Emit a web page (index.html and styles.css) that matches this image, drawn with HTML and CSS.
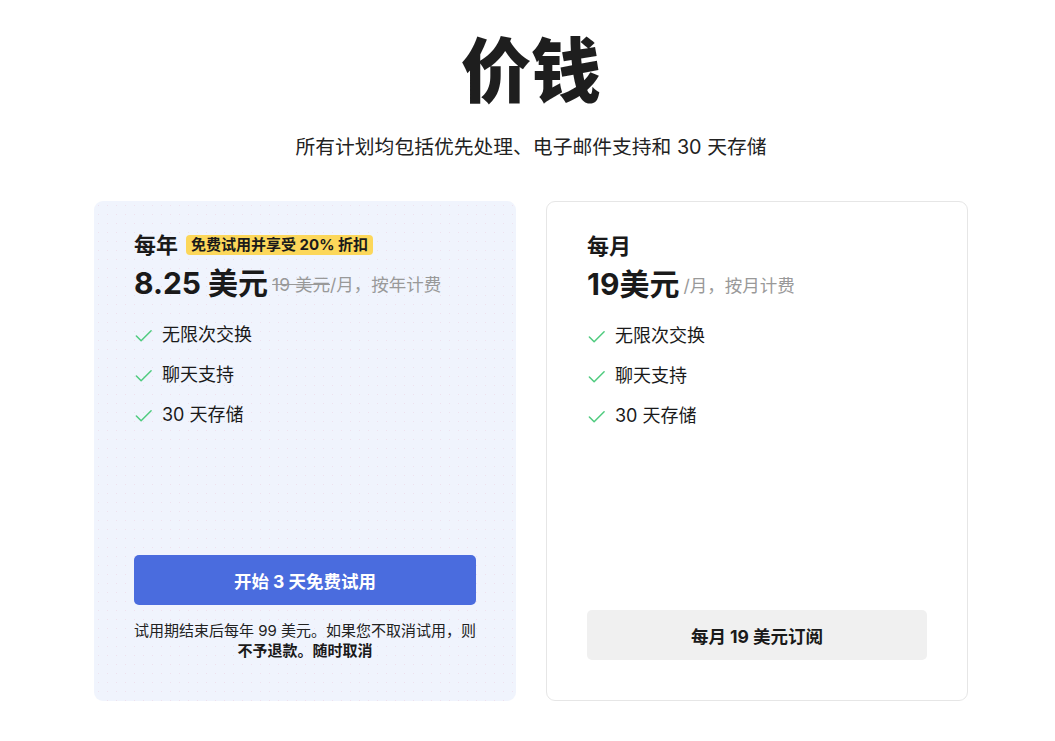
FILE: index.html
```html
<!DOCTYPE html>
<html lang="zh-CN">
<head>
<meta charset="utf-8">
<title>价钱</title>
<link rel="stylesheet" href="styles.css">
</head>
<body>
<main class="page">
  <h1 class="title">价钱</h1>
  <p class="subtitle">所有计划均包括优先处理、电子邮件支持和 30 天存储</p>
  <div class="plans">
    <section class="card card-featured">
      <div class="plan-head">
        <span class="plan-name">每年</span>
        <span class="badge">免费试用并享受 20% 折扣</span>
      </div>
      <div class="price">
        <span class="amount">8.25 美元</span>
        <span class="period"><s>19 美元</s>/月，按年计费</span>
      </div>
      <ul class="features">
        <li><svg class="check" viewBox="0 0 20 20"><polyline points="2.5 10.5 7.5 15.5 18 5"/></svg>无限次交换</li>
        <li><svg class="check" viewBox="0 0 20 20"><polyline points="2.5 10.5 7.5 15.5 18 5"/></svg>聊天支持</li>
        <li><svg class="check" viewBox="0 0 20 20"><polyline points="2.5 10.5 7.5 15.5 18 5"/></svg>30 天存储</li>
      </ul>
      <button class="btn btn-primary">开始 3 天免费试用</button>
      <p class="note"><span class="note-line">试用期结束后每年 99 美元。如果您不取消试用，则</span><strong>不予退款。随时取消</strong></p>
    </section>
    <section class="card card-plain">
      <div class="plan-head">
        <span class="plan-name">每月</span>
      </div>
      <div class="price">
        <span class="amount">19美元</span>
        <span class="period">/月，按月计费</span>
      </div>
      <ul class="features">
        <li><svg class="check" viewBox="0 0 20 20"><polyline points="2.5 10.5 7.5 15.5 18 5"/></svg>无限次交换</li>
        <li><svg class="check" viewBox="0 0 20 20"><polyline points="2.5 10.5 7.5 15.5 18 5"/></svg>聊天支持</li>
        <li><svg class="check" viewBox="0 0 20 20"><polyline points="2.5 10.5 7.5 15.5 18 5"/></svg>30 天存储</li>
      </ul>
      <button class="btn btn-secondary">每月 19 美元订阅</button>
    </section>
  </div>
</main>
</body>
</html>
```
FILE: styles.css
```css
* { box-sizing: border-box; }
html, body { margin: 0; padding: 0; background: #fff; }
body {
  font-family: Inter, "Noto Sans CJK SC", sans-serif;
  color: #1a1a1a;
  padding-left: 7px;
}
.page {
  display: flex;
  flex-direction: column;
  align-items: center;
  padding-top: 32px;
}
.title {
  margin: 0;
  font-size: 70px;
  line-height: 80px;
  font-weight: 900;
  color: #1e1e1e;
}
.subtitle {
  margin: 21px 0 0;
  font-size: 19.8px;
  line-height: 28px;
  color: #222;
}
.plans {
  margin-top: 40px;
  display: grid;
  grid-template-columns: 422px 422px;
  gap: 30px;
}
.card {
  min-height: 500px;
  border-radius: 9px;
  padding: 30px 40px 40px;
  display: flex;
  flex-direction: column;
}
.card-featured {
  background-color: #f0f4fd;
  background-image: radial-gradient(rgba(236, 190, 210, 0.35) 0.7px, transparent 1px);
  background-size: 9px 9px;
}
.card-plain {
  background: #fff;
  border: 1px solid #e6e6e6;
}
.plan-head {
  display: flex;
  align-items: center;
  gap: 8px;
  height: 28px;
}
.plan-name {
  font-size: 22px;
  line-height: 28px;
  font-weight: 700;
}
.badge {
  background: #fcd75a;
  color: #1a1a1a;
  font-size: 15px;
  line-height: 20px;
  font-weight: 700;
  padding: 0 5px;
  border-radius: 4px;
}
.price {
  margin-top: 6px;
  display: flex;
  align-items: center;
  gap: 4px;
  height: 36px;
}
.amount {
  font-size: 30px;
  line-height: 36px;
  font-weight: 700;
}
.period {
  font-size: 17.5px;
  line-height: 24px;
  padding-top: 4px;
  color: #999;
}
.period s { color: #999; }
.features {
  list-style: none;
  margin: 20px 0 0;
  padding: 0;
  display: flex;
  flex-direction: column;
  gap: 12px;
}
.features li {
  display: flex;
  align-items: center;
  gap: 9px;
  font-size: 18px;
  line-height: 28px;
  color: #1a1a1a;
}
.check {
  width: 19px;
  height: 19px;
  fill: none;
  stroke: #4fcb7f;
  stroke-width: 1.6;
  stroke-linecap: round;
  stroke-linejoin: round;
}
.btn {
  margin-top: auto;
  height: 50px;
  width: 100%;
  border: none;
  border-radius: 5px;
  font-family: Inter, "Noto Sans CJK SC", sans-serif;
  font-size: 17.5px;
  font-weight: 700;
}
.btn-primary {
  background: #4a6cde;
  color: #fff;
}
.btn-secondary {
  background: #f0f0f0;
  color: #1a1a1a;
}
.note {
  margin: 16px -8px 0;
  font-size: 15px;
  line-height: 20px;
  text-align: center;
  color: #222;
}
.note-line {
  display: block;
  white-space: nowrap;
}
.note strong {
  display: block;
  font-weight: 700;
  color: #1a1a1a;
}
```
